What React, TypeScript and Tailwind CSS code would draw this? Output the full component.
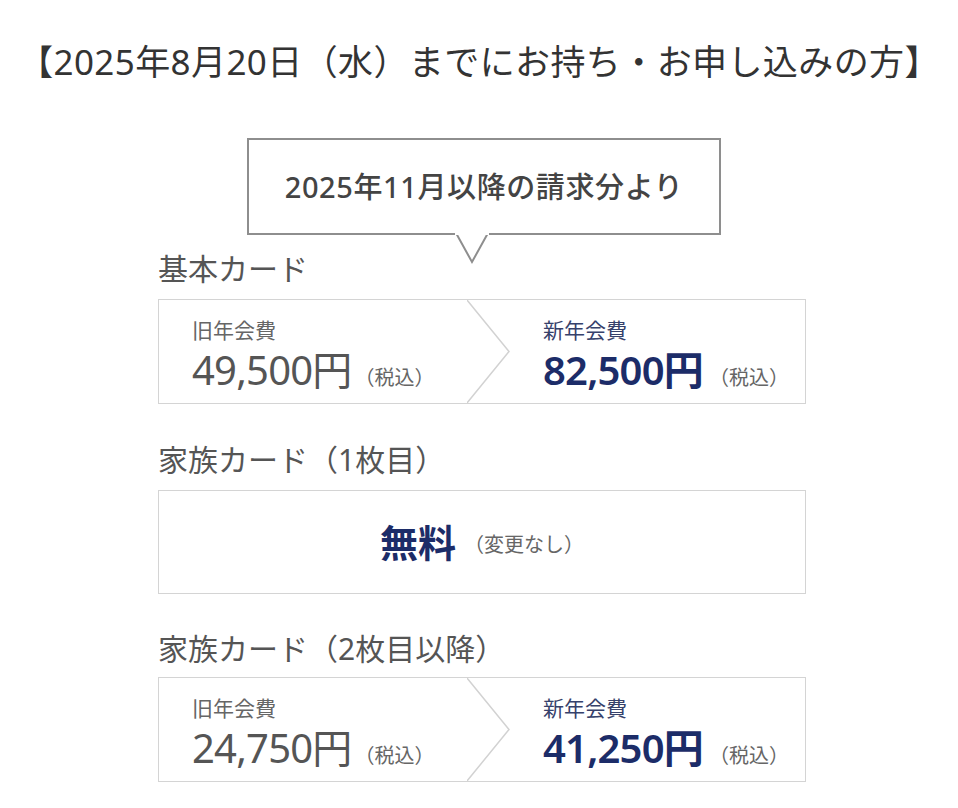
import React from "react";

const ff = { fontFamily: '"Noto Sans", "Noto Sans CJK JP", sans-serif' };

function Chevron() {
  return (
    <svg
      className="absolute top-0 left-[308px] h-full w-[46px]"
      viewBox="0 0 46 100"
      preserveAspectRatio="none"
    >
      <polyline points="0,0 42,50 0,100" fill="none" stroke="#d2d2d2" strokeWidth="1.5" vectorEffect="non-scaling-stroke" />
    </svg>
  );
}

function CompareCard({ oldPrice, newPrice }: { oldPrice: string; newPrice: string }) {
  return (
    <div className="relative flex h-[105px] w-[648px] border border-[#d4d4d4] bg-white">
      <Chevron />
      <div className="flex w-[350px] flex-col pl-[33px] pt-[15px]">
        <div className="text-[21px] leading-[30px] text-[#666]">旧年会費</div>
        <div className="flex items-baseline">
          <span className="text-[40px] leading-[50px] text-[#555] tracking-[-0.8px]">{oldPrice}</span>
          <span className="ml-[3px] text-[20px] text-[#666]">（税込）</span>
        </div>
      </div>
      <div className="flex flex-col pl-[34px] pt-[15px]">
        <div className="text-[21px] leading-[30px] text-[#36416b]">新年会費</div>
        <div className="flex items-baseline">
          <span className="text-[40px] leading-[50px] font-semibold text-[#1c2c68] tracking-[-0.8px]">{newPrice}</span>
          <span className="ml-[6px] text-[20px] text-[#666]">（税込）</span>
        </div>
      </div>
    </div>
  );
}

export default function App() {
  return (
    <div className="min-h-[808px] w-[958px] bg-white" style={ff}>
      <div className="pt-[40px] text-center text-[35px] leading-[44px] text-[#333] tracking-[0.4px]">
        【2025年8月20日（水）までにお持ち・お申し込みの方】
      </div>
      <div className="ml-[158px] mt-[54px] flex w-[650px] flex-col">
        <div className="relative ml-[89px] flex h-[97px] w-[474px] items-center justify-center border-2 border-[#8e8e8e] bg-white">
          <span className="text-[29px] font-medium text-[#444] tracking-[0.6px]">2025年11月以降の請求分より</span>
          <svg className="absolute left-[206px] top-[93px] h-[32px] w-[34px]" viewBox="0 0 34 32">
            <polygon points="1,0 17,29 33,0" fill="white" stroke="#8e8e8e" strokeWidth="2" />
            <rect x="0" y="0" width="34" height="2" fill="white" />
          </svg>
        </div>
        <div className="mt-[14px] text-[30px] leading-[40px] text-[#555]">基本カード</div>
        <div className="mt-[10px]">
          <CompareCard oldPrice="49,500円" newPrice="82,500円" />
        </div>
        <div className="mt-[36px] text-[30px] leading-[40px] text-[#555]">家族カード（1枚目）</div>
        <div className="mt-[10px] flex h-[104px] w-[648px] items-center justify-center border border-[#d4d4d4] bg-white">
          <span className="text-[38px] font-bold text-[#1c2c68]">無料</span>
          <span className="ml-[8px] mt-[6px] text-[20px] text-[#666]">（変更なし）</span>
        </div>
        <div className="mt-[35px] text-[30px] leading-[40px] text-[#555]">家族カード（2枚目以降）</div>
        <div className="mt-[8px]">
          <CompareCard oldPrice="24,750円" newPrice="41,250円" />
        </div>
      </div>
    </div>
  );
}
